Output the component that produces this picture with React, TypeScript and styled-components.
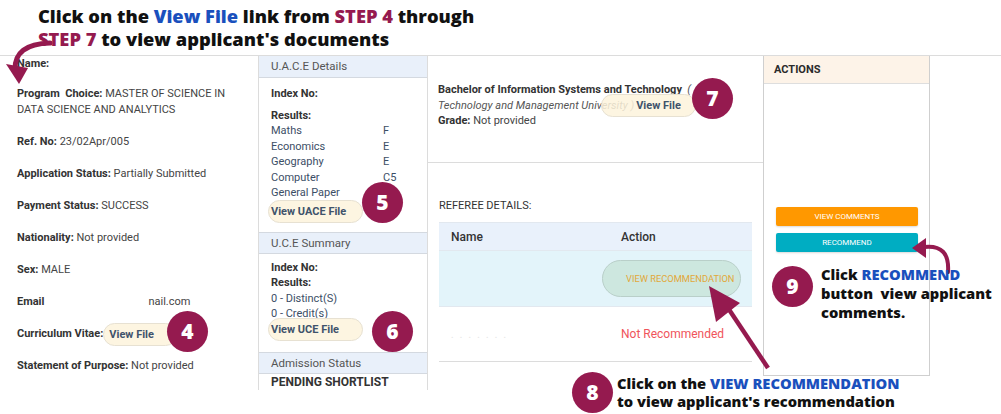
import React from "react";
import styled, { createGlobalStyle } from "styled-components";

const Global = createGlobalStyle`
  html, body { margin: 0; padding: 0; background: #fff; }
  body { width: 1001px; height: 414px; overflow: hidden; font-family: Roboto, "Liberation Sans", sans-serif; }
  * { box-sizing: border-box; }
`;

const MAROON = "#951a4f";
const BLUE = "#1a50bd";
const NOTE_FONT = `"Open Sans", Lato, sans-serif`;

const Page = styled.div`
  position: relative;
  width: 1001px;
  height: 414px;
  overflow: hidden;
  background: #fff;
`;

const Heading = styled.div`
  height: 55px;
  padding: 4px 0 0 38px;
  font-family: ${NOTE_FONT};
  font-weight: 800;
  font-size: 18.3px;
  line-height: 23px;
  color: #111;
  white-space: nowrap;
`;

const Em = styled.span<{ $c: string }>`
  color: ${(p) => p.$c};
`;

const Screen = styled.div`
  display: flex;
  align-items: flex-start;
  height: 335px;
  border-top: 1px solid #dcdcdc;
  font-size: 11px;
  color: #444;
`;

const InfoCol = styled.div`
  width: 259px;
  height: 100%;
  border-right: 1px solid #dcdcdc;
  padding: 0 10px 0 17px;
  display: flex;
  flex-direction: column;
  gap: 16px;
`;

const InfoItem = styled.div<{ $tight?: boolean }>`
  line-height: 16px;
  ${(p) => (p.$tight ? "margin-bottom: -2px;" : "")}
`;

const Label = styled.b`
  color: #333;
  font-weight: 700;
`;

const Redacted = styled.span<{ $w: number }>`
  display: inline-block;
  width: ${(p) => p.$w}px;
`;

const Pill = styled.span<{ $w: number; $pl: number; $ml?: number }>`
  display: inline-block;
  vertical-align: middle;
  width: ${(p) => p.$w}px;
  height: 23px;
  line-height: 21px;
  margin: -4px 0 -4px ${(p) => p.$ml || 0}px;
  padding-left: ${(p) => p.$pl}px;
  border-radius: 12px;
  background: rgba(253, 243, 220, 0.85);
  border: 1px solid #e7e1d2;
  color: #3f536b;
  font-weight: 700;
  font-size: 11px;
  white-space: nowrap;
`;

const ExamCol = styled.div`
  width: 169px;
  height: 100%;
  border-right: 1px solid #dcdcdc;
  display: flex;
  flex-direction: column;
`;

const SectionHead = styled.div<{ $top?: boolean }>`
  height: 22px;
  line-height: 21px;
  padding-left: 12px;
  background: #e9f0fa;
  border-top: ${(p) => (p.$top ? "none" : "1px solid #d4d9e0")};
  border-bottom: 1px solid #d4d9e0;
  color: #555;
  font-size: 11.5px;
`;

const SectionBody = styled.div<{ $h: number; $pt: number }>`
  height: ${(p) => p.$h}px;
  padding: ${(p) => p.$pt}px 8px 0 12px;
  line-height: 15.5px;
  color: #3c4e66;
`;

const BoldLine = styled.div<{ $mt?: number }>`
  font-weight: 700;
  color: #333;
  margin-top: ${(p) => p.$mt || 0}px;
`;

const Grade = styled.div`
  display: grid;
  grid-template-columns: 112px auto;
  margin-bottom: 3px;
`;

const Status = styled.div`
  padding: 0 12px;
  font-weight: 700;
  font-size: 12px;
  color: #333;
  line-height: 16px;
`;

const MainCol = styled.div`
  width: 335px;
  height: 100%;
  display: flex;
  flex-direction: column;
`;

const EduBlock = styled.div`
  height: 107px;
  border-bottom: 1px solid #dcdcdc;
  padding: 26px 10px 0 10px;
  line-height: 15.5px;
  white-space: nowrap;
`;

const Muted = styled.span`
  font-style: italic;
  color: #555;
`;

const RefBlock = styled.div`
  padding: 35px 11px 0 11px;
`;

const RefTitle = styled.div`
  line-height: 16px;
  color: #333;
  font-size: 11px;
  text-transform: uppercase;
`;

const Table = styled.div`
  margin-top: 8px;
  width: 313px;
  font-size: 12px;
`;

const Row = styled.div<{ $bg: string; $h: number; $bb?: boolean }>`
  display: grid;
  grid-template-columns: 170px 1fr;
  align-items: center;
  height: ${(p) => p.$h}px;
  background: ${(p) => p.$bg};
  border-top: 1px solid #e2e8ef;
  ${(p) => (p.$bb ? "border-bottom: 1px solid #dcdcdc;" : "")}
  color: #333;
`;

const Cell = styled.div<{ $pl?: number }>`
  padding-left: ${(p) => (p.$pl === undefined ? 12 : p.$pl)}px;
  font-weight: 500;
`;

const RecoPill = styled.span`
  display: inline-block;
  margin-left: -7px;
  width: 139px;
  height: 37px;
  line-height: 35px;
  padding-left: 23px;
  border-radius: 19px;
  background: #cde7df;
  border: 1px solid #b9cfc9;
  color: #e2a83a;
  font-size: 9.3px;
  font-weight: 400;
  white-space: nowrap;
`;

const NotReco = styled.span`
  color: #f0545b;
  font-weight: 400;
`;

const Faint = styled.span`
  color: #e6e6e6;
  font-size: 9px;
  letter-spacing: 2px;
`;

const ActionsBox = styled.div`
  width: 167px;
  height: 320px;
  border: 1px solid #cfcfcf;
  border-top: none;
  display: flex;
  flex-direction: column;
`;

const ActionsHead = styled.div`
  height: 28px;
  line-height: 27px;
  padding-left: 10px;
  background: #fdf3e8;
  border-bottom: 1px solid #dedede;
  font-weight: 700;
  color: #2b2b2b;
  font-size: 11px;
`;

const ActionsBody = styled.div`
  padding: 123px 0 0 12px;
  display: flex;
  flex-direction: column;
  gap: 7px;
`;

const Btn = styled.div<{ $bg: string }>`
  width: 142px;
  height: 19px;
  line-height: 19px;
  text-align: center;
  border-radius: 2px;
  background: ${(p) => p.$bg};
  color: #fff;
  font-size: 8px;
  text-transform: uppercase;
  box-shadow: 0 1px 2px rgba(0, 0, 0, 0.15);
`;

const Circle = styled.div<{ $x: number; $y: number }>`
  position: absolute;
  left: ${(p) => p.$x}px;
  top: ${(p) => p.$y}px;
  width: 41px;
  height: 41px;
  border-radius: 50%;
  background: ${MAROON};
  color: #fff;
  font-family: ${NOTE_FONT};
  font-weight: 800;
  font-size: 21px;
  line-height: 41px;
  text-align: center;
`;

const Note = styled.div<{ $x: number; $y: number; $lh: number }>`
  position: absolute;
  left: ${(p) => p.$x}px;
  top: ${(p) => p.$y}px;
  font-family: ${NOTE_FONT};
  font-weight: 800;
  font-size: 14.7px;
  line-height: ${(p) => p.$lh}px;
  color: #111;
  white-space: nowrap;
`;

const Arrows = styled.svg`
  position: absolute;
  left: 0;
  top: 0;
  width: 1001px;
  height: 414px;
  pointer-events: none;
`;

export default function App() {
  return (
    <Page>
      <Global />
      <Heading>
        Click on the <Em $c={BLUE}>View File</Em> link from <Em $c={MAROON}>STEP 4</Em> through
        <br />
        <Em $c={MAROON}>STEP 7</Em> to view applicant's documents
      </Heading>
      <Screen>
        <InfoCol>
          <InfoItem $tight>
            <Label>Name:</Label>
          </InfoItem>
          <InfoItem>
            <Label>Program&nbsp; Choice:</Label> MASTER OF SCIENCE IN
            <br />
            DATA SCIENCE AND ANALYTICS
          </InfoItem>
          <InfoItem>
            <Label>Ref. No:</Label> 23/02Apr/005
          </InfoItem>
          <InfoItem>
            <Label>Application Status:</Label> Partially Submitted
          </InfoItem>
          <InfoItem>
            <Label>Payment Status:</Label> SUCCESS
          </InfoItem>
          <InfoItem>
            <Label>Nationality:</Label> Not provided
          </InfoItem>
          <InfoItem>
            <Label>Sex:</Label> MALE
          </InfoItem>
          <InfoItem>
            <Label>Email</Label>
            <Redacted $w={104} />
            nail.com
          </InfoItem>
          <InfoItem>
            <Label>Curriculum Vitae:</Label>
            <Pill $w={74} $pl={5}>View File</Pill>
          </InfoItem>
          <InfoItem>
            <Label>Statement of Purpose:</Label> Not provided
          </InfoItem>
        </InfoCol>

        <ExamCol>
          <SectionHead $top>U.A.C.E Details</SectionHead>
          <SectionBody $h={155} $pt={8}>
            <BoldLine>Index No:</BoldLine>
            <BoldLine $mt={6}>Results:</BoldLine>
            <Grade>
              <span>Maths</span>
              <span>F</span>
              <span>Economics</span>
              <span>E</span>
              <span>Geography</span>
              <span>E</span>
              <span>Computer</span>
              <span>C5</span>
              <span>General Paper</span>
              <span />
            </Grade>
            <Pill $w={95} $pl={2} $ml={-3}>
              View UACE File
            </Pill>
          </SectionBody>
          <SectionHead>U.C.E Summary</SectionHead>
          <SectionBody $h={99} $pt={6}>
            <BoldLine>Index No:</BoldLine>
            <BoldLine>Results:</BoldLine>
            <div>0 - Distinct(S)</div>
            <div>0 - Credit(s)</div>
            <Pill $w={95} $pl={2} $ml={-3}>
              View UCE File
            </Pill>
          </SectionBody>
          <SectionHead>Admission Status</SectionHead>
          <Status>PENDING SHORTLIST</Status>
        </ExamCol>

        <MainCol>
          <EduBlock>
            <Label>Bachelor of Information Systems and Technology</Label> <Muted>&nbsp;(</Muted>
            <br />
            <Muted>Technology and Management University )</Muted>
            <Pill $w={95} $pl={34} $ml={-33}>
              View File
            </Pill>
            <br />
            <Label>Grade:</Label> Not provided
          </EduBlock>
          <RefBlock>
            <RefTitle>Referee Details:</RefTitle>
            <Table>
              <Row $bg="#e9f1fb" $h={28}>
                <Cell>Name</Cell>
                <Cell>Action</Cell>
              </Row>
              <Row $bg="#e3f4fa" $h={56}>
                <Cell />
                <Cell $pl={0}>
                  <RecoPill>VIEW RECOMMENDATION</RecoPill>
                </Cell>
              </Row>
              <Row $bg="#fff" $h={56} $bb>
                <Cell>
                  <Faint>. . . . . . .</Faint>
                </Cell>
                <Cell>
                  <NotReco>Not Recommended</NotReco>
                </Cell>
              </Row>
            </Table>
          </RefBlock>
        </MainCol>

        <ActionsBox>
          <ActionsHead>ACTIONS</ActionsHead>
          <ActionsBody>
            <Btn $bg="#ff9800">View Comments</Btn>
            <Btn $bg="#00adc2">Recommend</Btn>
          </ActionsBody>
        </ActionsBox>
      </Screen>

      <Arrows viewBox="0 0 1001 414">
        <path d="M 50 43 Q 14 44 15 70" fill="none" stroke={MAROON} strokeWidth="5" strokeLinecap="round" />
        <polygon points="6,64 28,68 19,84" fill={MAROON} />
        <path d="M 768 368 L 724 302" fill="none" stroke={MAROON} strokeWidth="4.5" />
        <polygon points="709,286 740,303 716,322" fill={MAROON} />
        <path d="M 948 272 Q 950 244 924 247" fill="none" stroke={MAROON} strokeWidth="4" strokeLinecap="round" />
        <polygon points="912,248 926,238 926,258" fill={MAROON} />
      </Arrows>

      <Circle $x={167} $y={311}>4</Circle>
      <Circle $x={362} $y={182}>5</Circle>
      <Circle $x={372} $y={311}>6</Circle>
      <Circle $x={692} $y={78}>7</Circle>
      <Circle $x={572} $y={372}>8</Circle>
      <Circle $x={772} $y={266}>9</Circle>

      <Note $x={617} $y={374} $lh={18}>
        Click on the <Em $c={BLUE}>VIEW RECOMMENDATION</Em>
        <br />
        to view applicant's recommendation
      </Note>
      <Note $x={821} $y={265} $lh={19}>
        Click <Em $c={BLUE}>RECOMMEND</Em>
        <br />
        button&nbsp; view applicant
        <br />
        comments.
      </Note>
    </Page>
  );
}
